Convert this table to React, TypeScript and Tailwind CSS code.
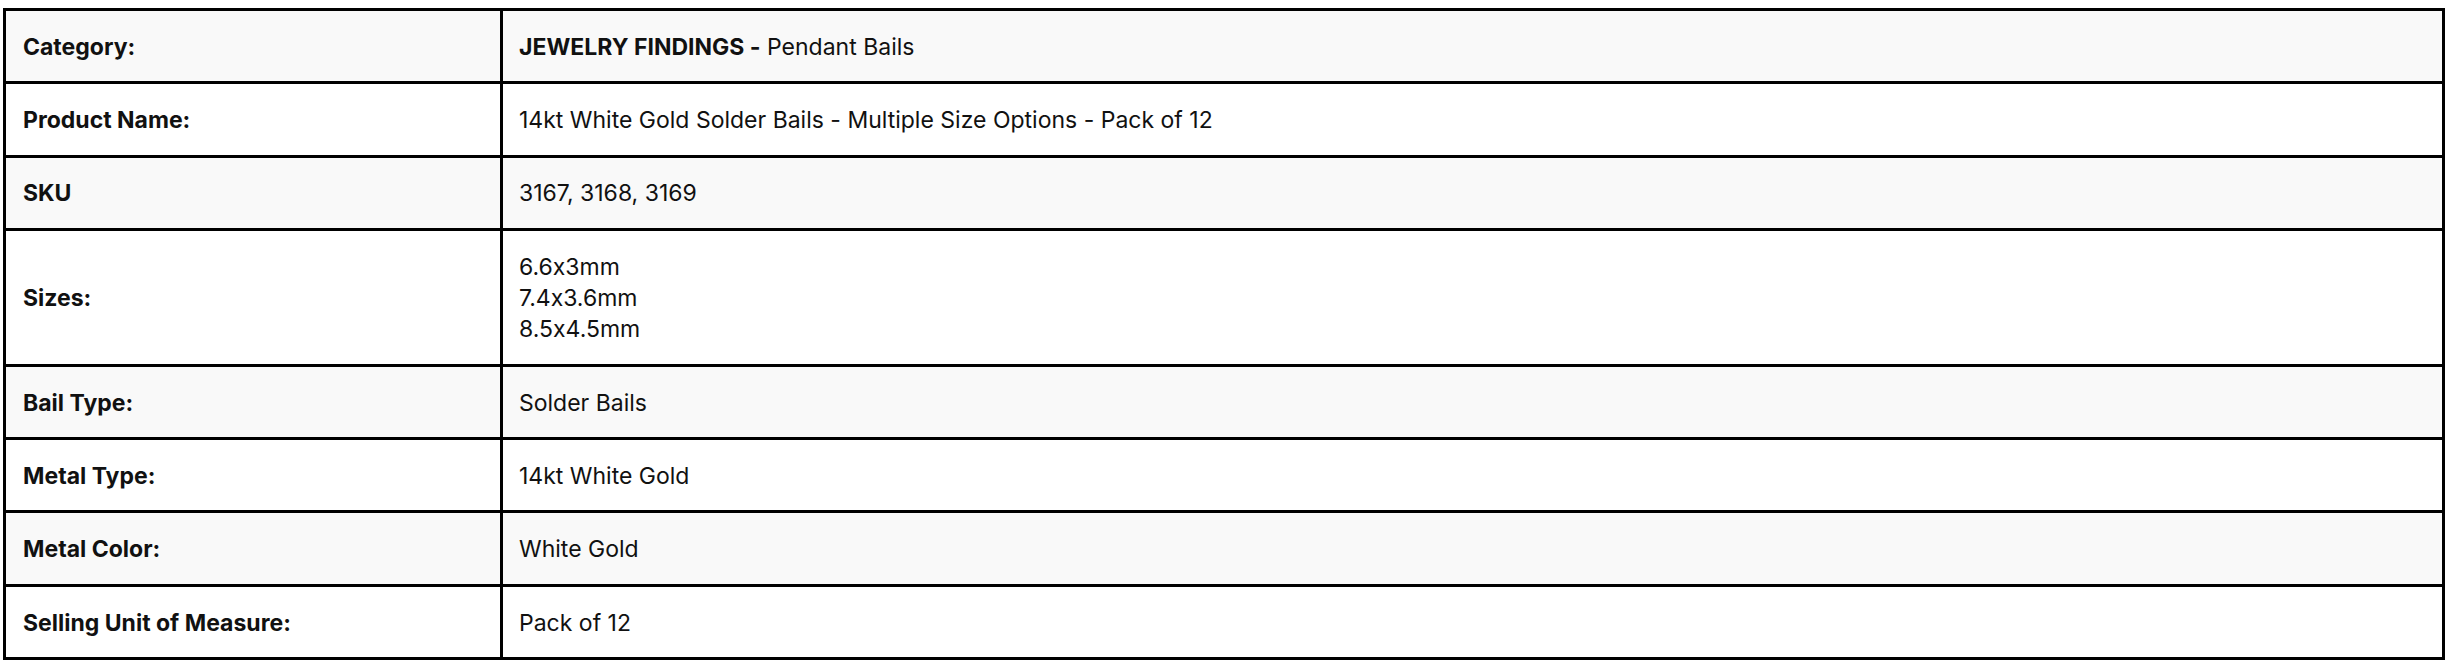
const ROWS: { label: string; value: React.ReactNode }[] = [
  {
    label: "Category:",
    value: (
      <>
        <span className="font-bold">JEWELRY FINDINGS -</span> Pendant Bails
      </>
    ),
  },
  {
    label: "Product Name:",
    value: "14kt White Gold Solder Bails - Multiple Size Options - Pack of 12",
  },
  { label: "SKU", value: "3167, 3168, 3169" },
  {
    label: "Sizes:",
    value: (
      <div className="flex flex-col leading-[31px]">
        <span>6.6x3mm</span>
        <span>7.4x3.6mm</span>
        <span>8.5x4.5mm</span>
      </div>
    ),
  },
  { label: "Bail Type:", value: "Solder Bails" },
  { label: "Metal Type:", value: "14kt White Gold" },
  { label: "Metal Color:", value: "White Gold" },
  { label: "Selling Unit of Measure:", value: "Pack of 12" },
];

export default function App() {
  return (
    <div className="min-h-screen bg-white pl-[3px] pt-[8px] font-['Inter',sans-serif] text-[#111] [font-feature-settings:'calt'_0]">
      <table className="w-[2442px] border-collapse text-[23px]">
        <tbody>
          {ROWS.map((row, i) => (
            <tr
              key={row.label}
              className={i % 2 === 0 ? "bg-[#f9f9f9]" : "bg-white"}
            >
              <td
                className={`w-[497px] border-[3px] border-black pl-[17px] pt-[2px] font-bold ${
                  row.label === "Sizes:" ? "h-[136px]" : "h-[73.3px]"
                }`}
              >
                {row.label}
              </td>
              <td className="border-[3px] border-black pl-[16px] pt-[2px]">
                {row.value}
              </td>
            </tr>
          ))}
        </tbody>
      </table>
    </div>
  );
}
